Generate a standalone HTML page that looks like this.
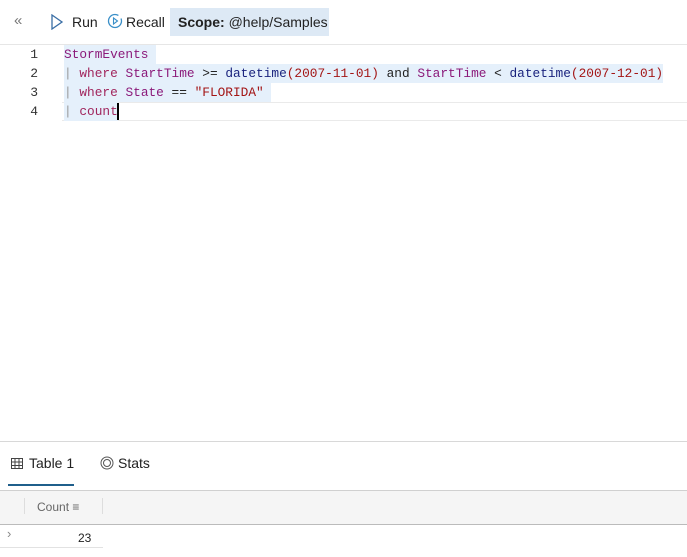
<!DOCTYPE html>
<html><head><style>
body{margin:0;width:687px;height:557px;background:#fff;font-family:"Liberation Sans",sans-serif;position:relative;overflow:hidden;color:#222}
.a{position:absolute}
.code{font-family:"Liberation Mono",monospace;font-size:12.8px;white-space:pre;line-height:19px}
.k{color:#a1265d}.f{color:#1a237e}.s{color:#a31515}.p{color:#999}.t{color:#8b1a7a}
.sel{background:#e5f0fb;display:inline-block;height:19px;vertical-align:top}
.ln{color:#333;font-family:"Liberation Mono",monospace;font-size:13px;width:20px;text-align:right}
</style></head><body>
<div class="a" style="left:14px;top:12px;font-size:15px;color:#777">«</div>
<svg class="a" style="left:50px;top:14px" width="14" height="16"><path d="M2 1 L12 8 L2 15 Z" fill="none" stroke="#3a6ea5" stroke-width="1.3"/></svg>
<div class="a" style="left:72px;top:14px;font-size:14px">Run</div>
<svg class="a" style="left:107px;top:13px" width="16" height="16"><circle cx="8" cy="8" r="6.5" fill="none" stroke="#3a8fc8" stroke-width="1.3" stroke-dasharray="34 4"/><path d="M6.5 5 L10.5 8 L6.5 11 Z" fill="none" stroke="#3a8fc8" stroke-width="1.1"/></svg>
<div class="a" style="left:126px;top:14px;font-size:14px">Recall</div>
<div class="a" style="left:170px;top:8px;width:159px;height:28px;background:#dde9f5"></div>
<div class="a" style="left:178px;top:14px;font-size:14px"><b style="font-weight:600">Scope:</b> @help/Samples</div>
<div class="a" style="left:0;top:44px;width:687px;height:1px;background:#e6e6e6"></div>
<div class="a" style="left:62px;top:102px;width:625px;height:1px;background:#eaeaea"></div>
<div class="a" style="left:62px;top:120px;width:625px;height:1px;background:#eaeaea"></div>
<div class="a ln" style="left:18px;top:45px;line-height:19px">1<br>2<br>3<br>4</div>
<div class="a code" style="left:64px;top:45px"><span class="sel"><span class="t">StormEvents</span> </span>
<span class="sel"><span class="p">|</span> <span class="k">where</span> <span class="t">StartTime</span> &gt;= <span class="f">datetime</span><span class="s">(2007-11-01)</span> and <span class="t">StartTime</span> &lt; <span class="f">datetime</span><span class="s">(2007-12-01)</span></span>
<span class="sel"><span class="p">|</span> <span class="k">where</span> <span class="t">State</span> == <span class="s">"FLORIDA"</span> </span>
<span class="sel"><span class="p">|</span> <span class="k">count</span></span></div>
<div class="a" style="left:117px;top:103px;width:2px;height:17px;background:#000"></div>
<div class="a" style="left:0;top:441px;width:687px;height:1px;background:#d8d8d8"></div>
<svg class="a" style="left:11px;top:458px" width="12" height="11"><rect x=".5" y=".5" width="11" height="10" fill="none" stroke="#444"/><path d="M0 4h12M0 7.5h12M4 0v11M8 0v11" stroke="#444"/></svg>
<div class="a" style="left:29px;top:455px;font-size:14px">Table 1</div>
<div class="a" style="left:8px;top:484px;width:66px;height:2px;background:#1f5f8b"></div>
<svg class="a" style="left:100px;top:456px" width="14" height="14"><circle cx="7" cy="7" r="6" fill="none" stroke="#555"/><circle cx="7" cy="7" r="3.5" fill="none" stroke="#555"/></svg>
<div class="a" style="left:118px;top:455px;font-size:14px">Stats</div>
<div class="a" style="left:0;top:490px;width:687px;height:33px;background:#f5f5f5;border-top:1px solid #d0d0d0;border-bottom:1px solid #bbb"></div>
<div class="a" style="left:24px;top:498px;width:1px;height:16px;background:#ddd"></div>
<div class="a" style="left:102px;top:498px;width:1px;height:16px;background:#ddd"></div>
<div class="a" style="left:37px;top:500px;font-size:12px;color:#666">Count ≡</div>
<div class="a" style="left:7px;top:526px;font-size:13px;color:#888">›</div>
<div class="a" style="left:78px;top:531px;font-size:12px">23</div>
<div class="a" style="left:0;top:547px;width:103px;height:1px;background:#e2e2e2"></div>
</body></html>
